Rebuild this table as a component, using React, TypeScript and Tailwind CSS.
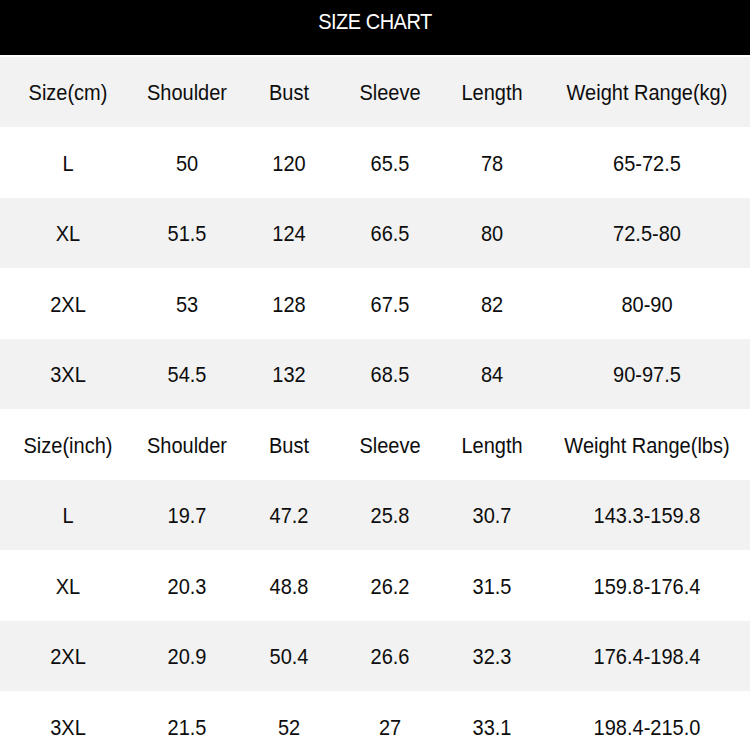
import React from 'react';

type Row = string[];

const cmHead: Row = ['Size(cm)', 'Shoulder', 'Bust', 'Sleeve', 'Length', 'Weight Range(kg)'];
const cmRows: Row[] = [
  ['L', '50', '120', '65.5', '78', '65-72.5'],
  ['XL', '51.5', '124', '66.5', '80', '72.5-80'],
  ['2XL', '53', '128', '67.5', '82', '80-90'],
  ['3XL', '54.5', '132', '68.5', '84', '90-97.5'],
];
const inchHead: Row = ['Size(inch)', 'Shoulder', 'Bust', 'Sleeve', 'Length', 'Weight Range(lbs)'];
const inchRows: Row[] = [
  ['L', '19.7', '47.2', '25.8', '30.7', '143.3-159.8'],
  ['XL', '20.3', '48.8', '26.2', '31.5', '159.8-176.4'],
  ['2XL', '20.9', '50.4', '26.6', '32.3', '176.4-198.4'],
  ['3XL', '21.5', '52', '27', '33.1', '198.4-215.0'],
];

const allRows: Row[] = [cmHead, ...cmRows, inchHead, ...inchRows];

export default function App() {
  return (
    <div
      className="w-[750px] h-[750px] overflow-hidden bg-white text-[#0d0d0d]"
      style={{ fontFamily: '"Liberation Sans", Arial, sans-serif' }}
    >
      {/* Title bar */}
      <div className="h-[55px] bg-black flex items-center justify-center pb-[14px]">
        <span className="inline-block scale-y-110 text-white text-[20px] tracking-[-0.5px]">SIZE CHART</span>
      </div>

      <div className="mt-[2px]">
        {allRows.map((row, i) => (
          <div
            key={i}
            className={`grid grid-cols-[136px_102px_102px_100px_104px_206px] items-center text-[20px] ${
              i % 2 === 0 ? 'h-[70px] bg-[#f2f2f2]' : 'h-[71px] bg-white'
            }`}
          >
            {row.map((cell, j) => (
              <div key={j} className="text-center whitespace-nowrap">
                <span className="inline-block scale-y-110">{cell}</span>
              </div>
            ))}
          </div>
        ))}
      </div>
    </div>
  );
}
